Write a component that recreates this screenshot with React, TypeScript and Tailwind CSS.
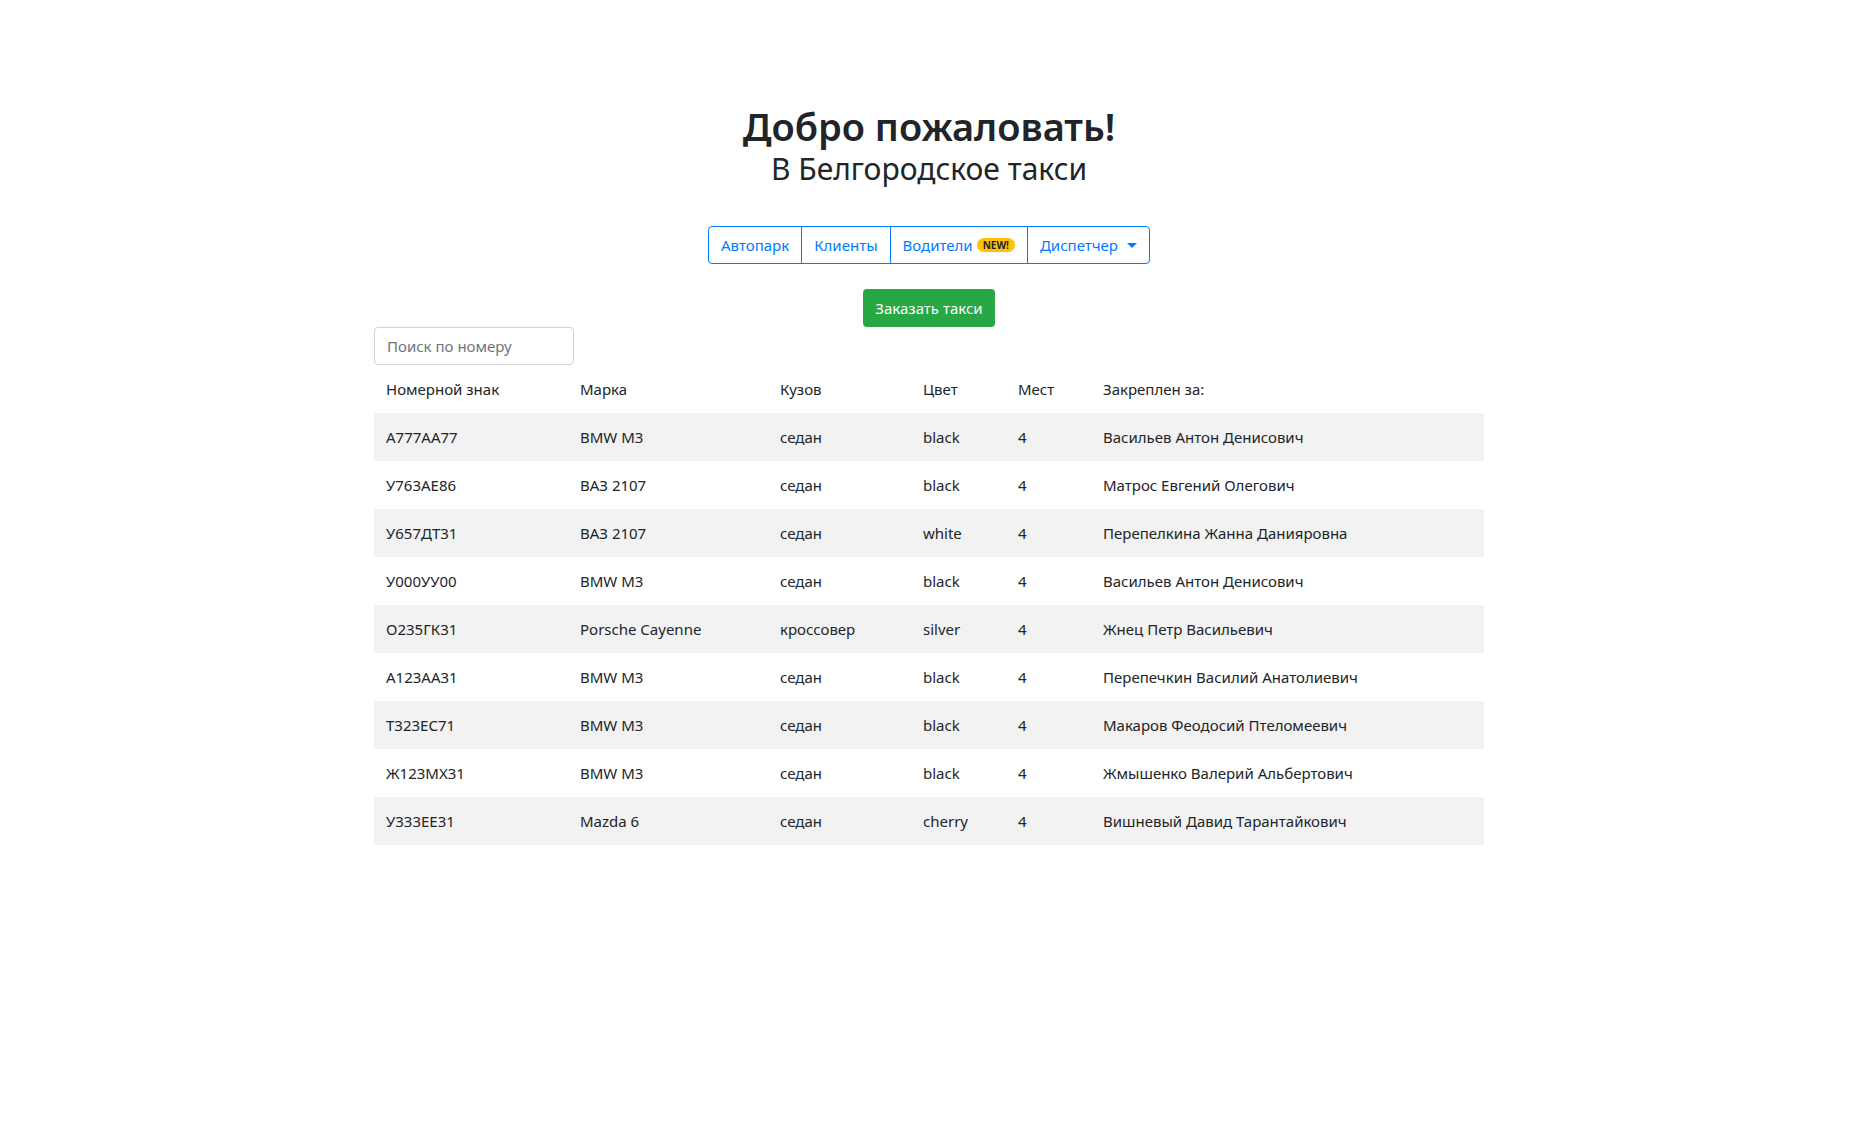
import React from "react";

type Car = {
  plate: string;
  brand: string;
  body: string;
  color: string;
  seats: number;
  driver: string;
};

const cars: Car[] = [
  { plate: "А777АА77", brand: "BMW M3", body: "седан", color: "black", seats: 4, driver: "Васильев Антон Денисович" },
  { plate: "У763АЕ86", brand: "ВАЗ 2107", body: "седан", color: "black", seats: 4, driver: "Матрос Евгений Олегович" },
  { plate: "У657ДТ31", brand: "ВАЗ 2107", body: "седан", color: "white", seats: 4, driver: "Перепелкина Жанна Данияровна" },
  { plate: "У000УУ00", brand: "BMW M3", body: "седан", color: "black", seats: 4, driver: "Васильев Антон Денисович" },
  { plate: "О235ГК31", brand: "Porsche Cayenne", body: "кроссовер", color: "silver", seats: 4, driver: "Жнец Петр Васильевич" },
  { plate: "А123АА31", brand: "BMW M3", body: "седан", color: "black", seats: 4, driver: "Перепечкин Василий Анатолиевич" },
  { plate: "Т323ЕС71", brand: "BMW M3", body: "седан", color: "black", seats: 4, driver: "Макаров Феодосий Птеломеевич" },
  { plate: "Ж123МХ31", brand: "BMW M3", body: "седан", color: "black", seats: 4, driver: "Жмышенко Валерий Альбертович" },
  { plate: "У333ЕЕ31", brand: "Mazda 6", body: "седан", color: "cherry", seats: 4, driver: "Вишневый Давид Тарантайкович" },
];

function NavButtons() {
  const btn = "h-[38px] px-3 border border-[#007bff] text-[#007bff] text-[15px] leading-6 bg-white -ml-px first:ml-0 flex items-center";
  return (
    <div className="flex justify-center">
      <div className="inline-flex">
        <button className={btn + " rounded-l-[4px]"}>Автопарк</button>
        <button className={btn}>Клиенты</button>
        <button className={btn}>
          Водители
          <span className="ml-[4px] rounded-full bg-[#ffc107] text-[#212529] text-[10px] font-bold leading-[14px] px-[6px]">NEW!</span>
        </button>
        <button className={btn + " rounded-r-[4px]"}>
          Диспетчер
          <span className="ml-[9px] w-0 h-0 border-l-[5px] border-r-[5px] border-t-[5px] border-l-transparent border-r-transparent border-t-[#007bff]" />
        </button>
      </div>
    </div>
  );
}

export default function App() {
  return (
    <div className="min-h-screen bg-white text-[#212529] font-['Noto_Sans','Open_Sans',sans-serif]">
      <div className="max-w-[1140px] mx-auto px-[15px] pt-[102px]">
        <h1 className="text-center text-[38px] leading-[48px] font-semibold">Добро пожаловать!</h1>
        <h3 className="text-center text-[30px] leading-[34px] mt-[2px]">В Белгородское такси</h3>

        <div className="mt-[40px]">
          <NavButtons />
        </div>

        <div className="flex justify-center mt-[25px]">
          <button className="h-[38px] px-3 rounded-[4px] bg-[#28a745] text-white text-[15px] leading-6">Заказать такси</button>
        </div>

        <input
          className="block w-[200px] h-[38px] px-3 border border-[#ced4da] rounded-[4px] text-[15px] placeholder:text-[#6c757d] outline-none"
          placeholder="Поиск по номеру"
        />

        <table className="w-full table-fixed text-[15px] text-left">
          <thead>
            <tr className="h-12">
              <th className="w-[194px] px-3 font-normal">Номерной знак</th>
              <th className="w-[200px] px-3 font-normal">Марка</th>
              <th className="w-[143px] px-3 font-normal">Кузов</th>
              <th className="w-[95px] px-3 font-normal">Цвет</th>
              <th className="w-[85px] px-3 font-normal">Мест</th>
              <th className="px-3 font-normal">Закреплен за:</th>
            </tr>
          </thead>
          <tbody>
            {cars.map((c, i) => (
              <tr key={i} className={"h-12 " + (i % 2 === 0 ? "bg-[#f2f2f2]" : "")}>
                <td className="px-3">{c.plate}</td>
                <td className="px-3">{c.brand}</td>
                <td className="px-3">{c.body}</td>
                <td className="px-3">{c.color}</td>
                <td className="px-3">{c.seats}</td>
                <td className="px-3">{c.driver}</td>
              </tr>
            ))}
          </tbody>
        </table>
      </div>
    </div>
  );
}
